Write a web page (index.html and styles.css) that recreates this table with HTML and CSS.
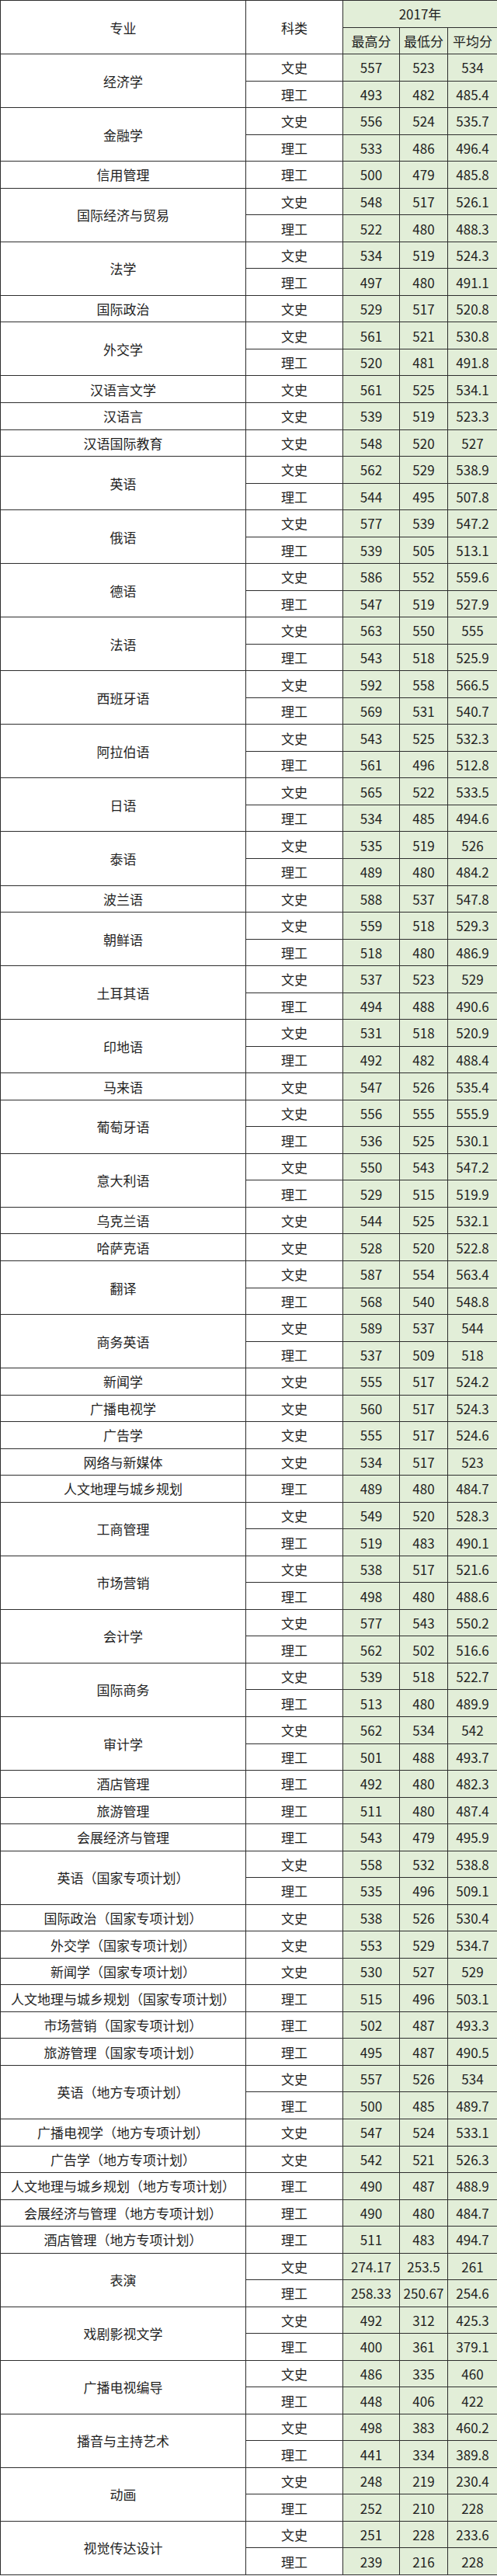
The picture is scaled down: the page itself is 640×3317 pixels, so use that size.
FILE: index.html
```html
<!DOCTYPE html>
<html lang="zh-CN">
<head>
<meta charset="utf-8">
<title>2017年 各专业录取分数</title>
<link rel="stylesheet" href="styles.css">
</head>
<body>
<div class="sheet">
<div class="cell maj rs2">专业</div><div class="cell type rs2">科类</div><div class="cell num cs3">2017年</div>
<div class="cell num">最高分</div><div class="cell num">最低分</div><div class="cell num">平均分</div>

<div class="cell maj rs2">经济学</div><div class="cell type">文史</div><div class="cell num">557</div><div class="cell num">523</div><div class="cell num">534</div>
<div class="cell type">理工</div><div class="cell num">493</div><div class="cell num">482</div><div class="cell num">485.4</div>

<div class="cell maj rs2">金融学</div><div class="cell type">文史</div><div class="cell num">556</div><div class="cell num">524</div><div class="cell num">535.7</div>
<div class="cell type">理工</div><div class="cell num">533</div><div class="cell num">486</div><div class="cell num">496.4</div>

<div class="cell maj">信用管理</div><div class="cell type">理工</div><div class="cell num">500</div><div class="cell num">479</div><div class="cell num">485.8</div>

<div class="cell maj rs2">国际经济与贸易</div><div class="cell type">文史</div><div class="cell num">548</div><div class="cell num">517</div><div class="cell num">526.1</div>
<div class="cell type">理工</div><div class="cell num">522</div><div class="cell num">480</div><div class="cell num">488.3</div>

<div class="cell maj rs2">法学</div><div class="cell type">文史</div><div class="cell num">534</div><div class="cell num">519</div><div class="cell num">524.3</div>
<div class="cell type">理工</div><div class="cell num">497</div><div class="cell num">480</div><div class="cell num">491.1</div>

<div class="cell maj">国际政治</div><div class="cell type">文史</div><div class="cell num">529</div><div class="cell num">517</div><div class="cell num">520.8</div>

<div class="cell maj rs2">外交学</div><div class="cell type">文史</div><div class="cell num">561</div><div class="cell num">521</div><div class="cell num">530.8</div>
<div class="cell type">理工</div><div class="cell num">520</div><div class="cell num">481</div><div class="cell num">491.8</div>

<div class="cell maj">汉语言文学</div><div class="cell type">文史</div><div class="cell num">561</div><div class="cell num">525</div><div class="cell num">534.1</div>
<div class="cell maj">汉语言</div><div class="cell type">文史</div><div class="cell num">539</div><div class="cell num">519</div><div class="cell num">523.3</div>
<div class="cell maj">汉语国际教育</div><div class="cell type">文史</div><div class="cell num">548</div><div class="cell num">520</div><div class="cell num">527</div>

<div class="cell maj rs2">英语</div><div class="cell type">文史</div><div class="cell num">562</div><div class="cell num">529</div><div class="cell num">538.9</div>
<div class="cell type">理工</div><div class="cell num">544</div><div class="cell num">495</div><div class="cell num">507.8</div>

<div class="cell maj rs2">俄语</div><div class="cell type">文史</div><div class="cell num">577</div><div class="cell num">539</div><div class="cell num">547.2</div>
<div class="cell type">理工</div><div class="cell num">539</div><div class="cell num">505</div><div class="cell num">513.1</div>

<div class="cell maj rs2">德语</div><div class="cell type">文史</div><div class="cell num">586</div><div class="cell num">552</div><div class="cell num">559.6</div>
<div class="cell type">理工</div><div class="cell num">547</div><div class="cell num">519</div><div class="cell num">527.9</div>

<div class="cell maj rs2">法语</div><div class="cell type">文史</div><div class="cell num">563</div><div class="cell num">550</div><div class="cell num">555</div>
<div class="cell type">理工</div><div class="cell num">543</div><div class="cell num">518</div><div class="cell num">525.9</div>

<div class="cell maj rs2">西班牙语</div><div class="cell type">文史</div><div class="cell num">592</div><div class="cell num">558</div><div class="cell num">566.5</div>
<div class="cell type">理工</div><div class="cell num">569</div><div class="cell num">531</div><div class="cell num">540.7</div>

<div class="cell maj rs2">阿拉伯语</div><div class="cell type">文史</div><div class="cell num">543</div><div class="cell num">525</div><div class="cell num">532.3</div>
<div class="cell type">理工</div><div class="cell num">561</div><div class="cell num">496</div><div class="cell num">512.8</div>

<div class="cell maj rs2">日语</div><div class="cell type">文史</div><div class="cell num">565</div><div class="cell num">522</div><div class="cell num">533.5</div>
<div class="cell type">理工</div><div class="cell num">534</div><div class="cell num">485</div><div class="cell num">494.6</div>

<div class="cell maj rs2">泰语</div><div class="cell type">文史</div><div class="cell num">535</div><div class="cell num">519</div><div class="cell num">526</div>
<div class="cell type">理工</div><div class="cell num">489</div><div class="cell num">480</div><div class="cell num">484.2</div>

<div class="cell maj">波兰语</div><div class="cell type">文史</div><div class="cell num">588</div><div class="cell num">537</div><div class="cell num">547.8</div>

<div class="cell maj rs2">朝鲜语</div><div class="cell type">文史</div><div class="cell num">559</div><div class="cell num">518</div><div class="cell num">529.3</div>
<div class="cell type">理工</div><div class="cell num">518</div><div class="cell num">480</div><div class="cell num">486.9</div>

<div class="cell maj rs2">土耳其语</div><div class="cell type">文史</div><div class="cell num">537</div><div class="cell num">523</div><div class="cell num">529</div>
<div class="cell type">理工</div><div class="cell num">494</div><div class="cell num">488</div><div class="cell num">490.6</div>

<div class="cell maj rs2">印地语</div><div class="cell type">文史</div><div class="cell num">531</div><div class="cell num">518</div><div class="cell num">520.9</div>
<div class="cell type">理工</div><div class="cell num">492</div><div class="cell num">482</div><div class="cell num">488.4</div>

<div class="cell maj">马来语</div><div class="cell type">文史</div><div class="cell num">547</div><div class="cell num">526</div><div class="cell num">535.4</div>

<div class="cell maj rs2">葡萄牙语</div><div class="cell type">文史</div><div class="cell num">556</div><div class="cell num">555</div><div class="cell num">555.9</div>
<div class="cell type">理工</div><div class="cell num">536</div><div class="cell num">525</div><div class="cell num">530.1</div>

<div class="cell maj rs2">意大利语</div><div class="cell type">文史</div><div class="cell num">550</div><div class="cell num">543</div><div class="cell num">547.2</div>
<div class="cell type">理工</div><div class="cell num">529</div><div class="cell num">515</div><div class="cell num">519.9</div>

<div class="cell maj">乌克兰语</div><div class="cell type">文史</div><div class="cell num">544</div><div class="cell num">525</div><div class="cell num">532.1</div>
<div class="cell maj">哈萨克语</div><div class="cell type">文史</div><div class="cell num">528</div><div class="cell num">520</div><div class="cell num">522.8</div>

<div class="cell maj rs2">翻译</div><div class="cell type">文史</div><div class="cell num">587</div><div class="cell num">554</div><div class="cell num">563.4</div>
<div class="cell type">理工</div><div class="cell num">568</div><div class="cell num">540</div><div class="cell num">548.8</div>

<div class="cell maj rs2">商务英语</div><div class="cell type">文史</div><div class="cell num">589</div><div class="cell num">537</div><div class="cell num">544</div>
<div class="cell type">理工</div><div class="cell num">537</div><div class="cell num">509</div><div class="cell num">518</div>

<div class="cell maj">新闻学</div><div class="cell type">文史</div><div class="cell num">555</div><div class="cell num">517</div><div class="cell num">524.2</div>
<div class="cell maj">广播电视学</div><div class="cell type">文史</div><div class="cell num">560</div><div class="cell num">517</div><div class="cell num">524.3</div>
<div class="cell maj">广告学</div><div class="cell type">文史</div><div class="cell num">555</div><div class="cell num">517</div><div class="cell num">524.6</div>
<div class="cell maj">网络与新媒体</div><div class="cell type">文史</div><div class="cell num">534</div><div class="cell num">517</div><div class="cell num">523</div>
<div class="cell maj">人文地理与城乡规划</div><div class="cell type">理工</div><div class="cell num">489</div><div class="cell num">480</div><div class="cell num">484.7</div>

<div class="cell maj rs2">工商管理</div><div class="cell type">文史</div><div class="cell num">549</div><div class="cell num">520</div><div class="cell num">528.3</div>
<div class="cell type">理工</div><div class="cell num">519</div><div class="cell num">483</div><div class="cell num">490.1</div>

<div class="cell maj rs2">市场营销</div><div class="cell type">文史</div><div class="cell num">538</div><div class="cell num">517</div><div class="cell num">521.6</div>
<div class="cell type">理工</div><div class="cell num">498</div><div class="cell num">480</div><div class="cell num">488.6</div>

<div class="cell maj rs2">会计学</div><div class="cell type">文史</div><div class="cell num">577</div><div class="cell num">543</div><div class="cell num">550.2</div>
<div class="cell type">理工</div><div class="cell num">562</div><div class="cell num">502</div><div class="cell num">516.6</div>

<div class="cell maj rs2">国际商务</div><div class="cell type">文史</div><div class="cell num">539</div><div class="cell num">518</div><div class="cell num">522.7</div>
<div class="cell type">理工</div><div class="cell num">513</div><div class="cell num">480</div><div class="cell num">489.9</div>

<div class="cell maj rs2">审计学</div><div class="cell type">文史</div><div class="cell num">562</div><div class="cell num">534</div><div class="cell num">542</div>
<div class="cell type">理工</div><div class="cell num">501</div><div class="cell num">488</div><div class="cell num">493.7</div>

<div class="cell maj">酒店管理</div><div class="cell type">理工</div><div class="cell num">492</div><div class="cell num">480</div><div class="cell num">482.3</div>
<div class="cell maj">旅游管理</div><div class="cell type">理工</div><div class="cell num">511</div><div class="cell num">480</div><div class="cell num">487.4</div>
<div class="cell maj">会展经济与管理</div><div class="cell type">理工</div><div class="cell num">543</div><div class="cell num">479</div><div class="cell num">495.9</div>

<div class="cell maj rs2">英语（国家专项计划）</div><div class="cell type">文史</div><div class="cell num">558</div><div class="cell num">532</div><div class="cell num">538.8</div>
<div class="cell type">理工</div><div class="cell num">535</div><div class="cell num">496</div><div class="cell num">509.1</div>

<div class="cell maj">国际政治（国家专项计划）</div><div class="cell type">文史</div><div class="cell num">538</div><div class="cell num">526</div><div class="cell num">530.4</div>
<div class="cell maj">外交学（国家专项计划）</div><div class="cell type">文史</div><div class="cell num">553</div><div class="cell num">529</div><div class="cell num">534.7</div>
<div class="cell maj">新闻学（国家专项计划）</div><div class="cell type">文史</div><div class="cell num">530</div><div class="cell num">527</div><div class="cell num">529</div>
<div class="cell maj">人文地理与城乡规划（国家专项计划）</div><div class="cell type">理工</div><div class="cell num">515</div><div class="cell num">496</div><div class="cell num">503.1</div>
<div class="cell maj">市场营销（国家专项计划）</div><div class="cell type">理工</div><div class="cell num">502</div><div class="cell num">487</div><div class="cell num">493.3</div>
<div class="cell maj">旅游管理（国家专项计划）</div><div class="cell type">理工</div><div class="cell num">495</div><div class="cell num">487</div><div class="cell num">490.5</div>

<div class="cell maj rs2">英语（地方专项计划）</div><div class="cell type">文史</div><div class="cell num">557</div><div class="cell num">526</div><div class="cell num">534</div>
<div class="cell type">理工</div><div class="cell num">500</div><div class="cell num">485</div><div class="cell num">489.7</div>

<div class="cell maj">广播电视学（地方专项计划）</div><div class="cell type">文史</div><div class="cell num">547</div><div class="cell num">524</div><div class="cell num">533.1</div>
<div class="cell maj">广告学（地方专项计划）</div><div class="cell type">文史</div><div class="cell num">542</div><div class="cell num">521</div><div class="cell num">526.3</div>
<div class="cell maj">人文地理与城乡规划（地方专项计划）</div><div class="cell type">理工</div><div class="cell num">490</div><div class="cell num">487</div><div class="cell num">488.9</div>
<div class="cell maj">会展经济与管理（地方专项计划）</div><div class="cell type">理工</div><div class="cell num">490</div><div class="cell num">480</div><div class="cell num">484.7</div>
<div class="cell maj">酒店管理（地方专项计划）</div><div class="cell type">理工</div><div class="cell num">511</div><div class="cell num">483</div><div class="cell num">494.7</div>

<div class="cell maj rs2">表演</div><div class="cell type">文史</div><div class="cell num">274.17</div><div class="cell num">253.5</div><div class="cell num">261</div>
<div class="cell type">理工</div><div class="cell num">258.33</div><div class="cell num">250.67</div><div class="cell num">254.6</div>

<div class="cell maj rs2">戏剧影视文学</div><div class="cell type">文史</div><div class="cell num">492</div><div class="cell num">312</div><div class="cell num">425.3</div>
<div class="cell type">理工</div><div class="cell num">400</div><div class="cell num">361</div><div class="cell num">379.1</div>

<div class="cell maj rs2">广播电视编导</div><div class="cell type">文史</div><div class="cell num">486</div><div class="cell num">335</div><div class="cell num">460</div>
<div class="cell type">理工</div><div class="cell num">448</div><div class="cell num">406</div><div class="cell num">422</div>

<div class="cell maj rs2">播音与主持艺术</div><div class="cell type">文史</div><div class="cell num">498</div><div class="cell num">383</div><div class="cell num">460.2</div>
<div class="cell type">理工</div><div class="cell num">441</div><div class="cell num">334</div><div class="cell num">389.8</div>

<div class="cell maj rs2">动画</div><div class="cell type">文史</div><div class="cell num">248</div><div class="cell num">219</div><div class="cell num">230.4</div>
<div class="cell type">理工</div><div class="cell num">252</div><div class="cell num">210</div><div class="cell num">228</div>

<div class="cell maj rs2">视觉传达设计</div><div class="cell type">文史</div><div class="cell num">251</div><div class="cell num">228</div><div class="cell num">233.6</div>
<div class="cell type">理工</div><div class="cell num">239</div><div class="cell num">216</div><div class="cell num">228</div>
</div>
</body>
</html>
```

FILE: styles.css
```css
html, body {
  margin: 0;
  padding: 0;
  background: #ffffff;
}

.sheet {
  width: 640px;
  box-sizing: border-box;
  padding: 1px 0 1px 1px;
  background: #2e2e2e;
  display: grid;
  grid-template-columns: 315px 124px 72px 61px 63px;
  grid-auto-rows: 33.5417px;
  column-gap: 1px;
  row-gap: 1px;
  font-family: "Noto Sans CJK SC", "Noto Sans", sans-serif;
  font-size: 17px;
  color: #1f1f1f;
}

.cell {
  display: flex;
  align-items: center;
  justify-content: center;
  background: #ffffff;
  white-space: nowrap;
  overflow: hidden;
  line-height: 1;
}

.num {
  background: #e2eed8;
}

.rs2 {
  grid-row: span 2;
}

.cs3 {
  grid-column: span 3;
}
```
